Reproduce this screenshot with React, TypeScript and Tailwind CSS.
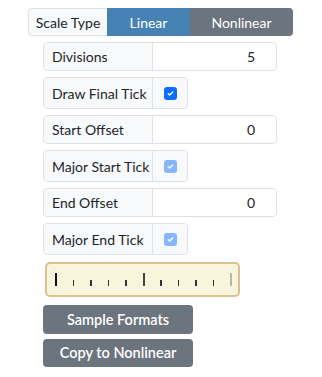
import React, { useState } from 'react';

const font = { fontFamily: 'Lato, "Open Sans", sans-serif' };

// 数值输入行
function NumberRow({ label, value }: { label: string; value: string }) {
  return (
    <div className="flex h-[29px] w-[234px] rounded-[4px] border border-[#dee2e6] text-[14px] text-[#212529]">
      <div className="flex w-[109px] items-center rounded-l-[4px] border-r border-[#dee2e6] bg-[#f8f9fa] pl-[8px]">
        {label}
      </div>
      <div className="flex flex-1 items-center justify-end rounded-r-[4px] bg-white pr-[21px]">{value}</div>
    </div>
  );
}

// 复选框行
function CheckRow({ label, checked, dim }: { label: string; checked: boolean; dim?: boolean }) {
  return (
    <div className="flex h-[32px] w-[145px] rounded-[4px] border border-[#dee2e6] text-[14px] text-[#212529]">
      <div className="flex w-[109px] items-center whitespace-nowrap rounded-l-[4px] border-r border-[#dee2e6] bg-[#f8f9fa] pl-[8px]">
        {label}
      </div>
      <div className="flex flex-1 items-center justify-center rounded-r-[4px] bg-[#f8f9fa]">
        <div
          className={
            'flex h-[13px] w-[13px] items-center justify-center rounded-[3px] ' +
            (dim ? 'bg-[#86b7fe]' : 'bg-[#0d6efd]')
          }
        >
          {checked && (
            <svg width="9" height="9" viewBox="0 0 20 20">
              <path d="M5 10.5l3 3 7-7" fill="none" stroke="white" strokeWidth="3" strokeLinecap="round" strokeLinejoin="round" />
            </svg>
          )}
        </div>
      </div>
    </div>
  );
}

// 刻度尺预览
function Ruler() {
  const ticks = Array.from({ length: 11 }, (_, i) => i);
  return (
    <div className="relative ml-[2px] h-[35px] w-[195px] rounded-[5px] border-2 border-[#dcc08e] bg-[#f7f5dc]">
      {ticks.map((i) => {
        const cls =
          i === 10
            ? 'h-[13px] w-[2px] bg-[#b8b8a8]'
            : i === 0
            ? 'h-[13px] w-[2px] bg-[#111]'
            : i === 5
            ? 'h-[13px] w-[2px] bg-[#444]'
            : 'h-[6px] w-[1.5px] bg-[#333]';
        return (
          <div key={i} className={'absolute bottom-[9px] ' + cls} style={{ left: 8 + i * 17.5 }} />
        );
      })}
    </div>
  );
}

export default function App() {
  const [linear, setLinear] = useState(true);
  return (
    <div className="min-h-screen bg-white pt-2" style={font}>
      <div className="ml-[28px] flex h-[28px] w-[265px] text-[14px]">
        <div className="flex w-[79px] items-center justify-center rounded-l-[4px] border border-r-0 border-[#dee2e6] bg-[#f8f9fa] text-[#212529]">
          Scale Type
        </div>
        <button
          onClick={() => setLinear(true)}
          className={'w-[83px] text-white ' + (linear ? 'bg-[#4682b4]' : 'bg-[#6c757d]')}
        >
          Linear
        </button>
        <button
          onClick={() => setLinear(false)}
          className={'flex-1 rounded-r-[4px] text-white ' + (linear ? 'bg-[#6c757d]' : 'bg-[#4682b4]')}
        >
          Nonlinear
        </button>
      </div>

      <div className="ml-[43px] mt-[6px] flex flex-col gap-[6px]">
        <NumberRow label="Divisions" value="5" />
        <CheckRow label="Draw Final Tick" checked />
        <NumberRow label="Start Offset" value="0" />
        <CheckRow label="Major Start Tick" checked dim />
        <NumberRow label="End Offset" value="0" />
        <CheckRow label="Major End Tick" checked dim />
        <div className="mt-[1px]">
          <Ruler />
        </div>
        <div className="mt-[2px] flex flex-col gap-[5px]">
          <button className="h-[29px] w-[150px] rounded-[4px] bg-[#6c757d] text-[14.5px] font-semibold text-white">
            Sample Formats
          </button>
          <button className="h-[28px] w-[150px] rounded-[4px] bg-[#6c757d] text-[14.5px] font-semibold text-white">
            Copy to Nonlinear
          </button>
        </div>
      </div>
    </div>
  );
}
